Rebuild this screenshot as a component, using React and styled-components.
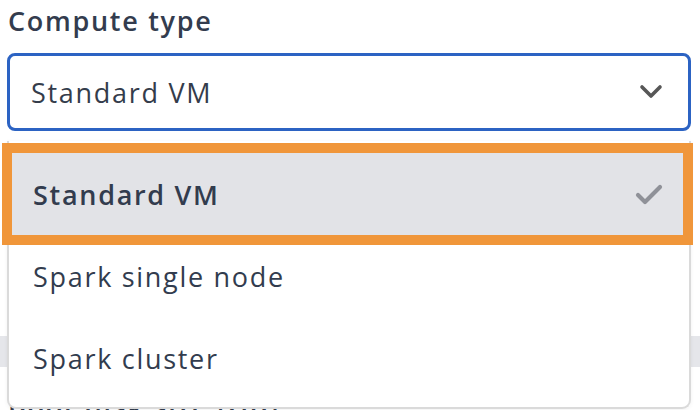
import React, { useState } from 'react';
import styled, { createGlobalStyle } from 'styled-components';

const options = ['Standard VM', 'Spark single node', 'Spark cluster'];

const App = () => {
  const [selected, setSelected] = useState('Standard VM');

  return (
    <>
      <GlobalStyle />
      <Page>
        <Field>
          <Label>Compute type</Label>
          <SelectWrap>
            <SelectBox>
              <SelectValue>{selected}</SelectValue>
              <svg width="24" height="16" viewBox="0 0 24 16">
                <polyline
                  points="3,3 12,12 21,3"
                  fill="none"
                  stroke="#575757"
                  strokeWidth="3.6"
                  strokeLinecap="round"
                  strokeLinejoin="round"
                />
              </svg>
            </SelectBox>
            <Menu>
              {options.map((opt) => (
                <Option key={opt} $active={opt === selected} onClick={() => setSelected(opt)}>
                  {opt}
                  {opt === selected && (
                    <svg width="28" height="22" viewBox="0 0 28 22">
                      <polyline
                        points="3,12 10,19 25,4"
                        fill="none"
                        stroke="#8f9198"
                        strokeWidth="4.2"
                        strokeLinecap="round"
                        strokeLinejoin="round"
                      />
                    </svg>
                  )}
                </Option>
              ))}
            </Menu>
          </SelectWrap>
        </Field>

        <Band />

        <Field>
          <Label>Boot disk size (GB)</Label>
        </Field>
      </Page>
    </>
  );
};

const GlobalStyle = createGlobalStyle`
  body {
    margin: 0;
    background: #ffffff;
    font-family: "Open Sans", "Liberation Sans", sans-serif;
    overflow: hidden;
  }
`;

const Page = styled.div`
  width: 700px;
  height: 410px;
  overflow: hidden;
  padding-top: 4px;
  box-sizing: border-box;
`;

const Field = styled.div`
  padding: 0 9px 0 7px;
`;

const Label = styled.div`
  font-size: 27px;
  line-height: 34px;
  font-weight: 600;
  letter-spacing: 1.7px;
  color: #333c4e;
  padding-left: 1px;
  margin-bottom: 15px;
`;

const SelectWrap = styled.div`
  position: relative;
`;

const SelectBox = styled.div`
  height: 78px;
  box-sizing: border-box;
  border: 3px solid #2c63c3;
  border-radius: 8px;
  display: flex;
  align-items: center;
  justify-content: space-between;
  padding: 0 25px 0 21px;
  background: #ffffff;
`;

const SelectValue = styled.span`
  font-size: 27px;
  letter-spacing: 1.7px;
  color: #343c4b;
`;

const Menu = styled.div`
  position: absolute;
  top: calc(100% + 10px);
  left: 0;
  right: 0;
  z-index: 10;
  background: #ffffff;
  border: 2px solid #dadada;
  border-top: none;
  border-radius: 0 0 9px 9px;
  box-shadow: 0 1px 4px rgba(0, 0, 0, 0.06);
  padding: 12px 6px 8px 3px;
  display: flex;
  flex-direction: column;
`;

const Option = styled.div`
  height: 82px;
  display: flex;
  align-items: center;
  justify-content: space-between;
  padding: 0 20px 0 21px;
  font-size: 27px;
  letter-spacing: 1.7px;
  color: #323c4e;
  font-weight: ${({ $active }) => ($active ? 600 : 400)};
  background: ${({ $active }) => ($active ? '#e2e3e7' : 'transparent')};
  outline: ${({ $active }) => ($active ? '10px solid #f0963a' : 'none')};
  cursor: pointer;
`;

const Band = styled.div`
  margin-top: 205px;
  height: 31px;
  background: #e5e6ea;
  margin-bottom: 22px;
`;

export default App;
